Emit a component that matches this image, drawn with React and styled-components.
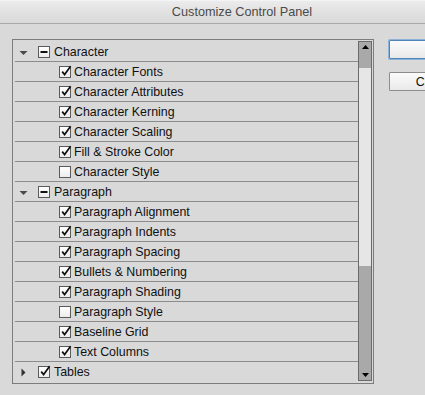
import styled, { createGlobalStyle } from "styled-components";

const Global = createGlobalStyle`
    html, body {
        margin: 0;
        padding: 0;
        background: #d9d9d9;
        overflow: hidden;
    }
    body {
        font-family: "Liberation Sans", Arial, sans-serif;
        color: #111;
    }
`;

const Window = styled.div`
    width: 425px;
    height: 395px;
    display: flex;
    flex-direction: column;
    background: #d9d9d9;
    overflow: hidden;
`;

const TitleBar = styled.div`
    height: 22px;
    flex: none;
    display: flex;
    align-items: center;
    justify-content: center;
    padding-left: 59px;
    background: linear-gradient(#ececec, #e3e3e3 40%, #d9d9d9);
    border-top: 1px solid #f4f4f4;
    border-bottom: 1px solid #a9a9a9;
    font-size: 12.7px;
    color: #4a4a4a;
`;

const Body = styled.div`
    display: flex;
    flex-direction: row;
    padding: 15px 0 0 12px;
`;

const ListBox = styled.div`
    width: 357px;
    height: 341px;
    flex: none;
    border: 1px solid #7c7c7c;
    padding: 2px 1px 0 2px;
    display: flex;
    flex-direction: row;
    box-sizing: content-box;
`;

const List = styled.div`
    flex: 1;
    display: flex;
    flex-direction: column;
`;

const Row = styled.div`
    flex: none;
    display: flex;
    align-items: center;
    padding-left: ${(p) => p.$indent}px;
    padding-top: 1px;
    box-sizing: content-box;
    height: 18px;
    border-bottom: ${(p) => (p.$last ? "none" : "1px solid #8c8c8c")};
    font-size: 12.4px;
`;

const Disclosure = styled.svg`
    width: 9px;
    height: 9px;
    margin-right: 10px;
    flex: none;
`;

const Box = styled.span`
    width: 10px;
    height: 10px;
    flex: none;
    position: relative;
    border: 1px solid #5a5a5a;
    background: linear-gradient(#ffffff, #ececec);
    margin-right: ${(p) => p.$gap}px;
`;

const Mark = styled.svg`
    position: absolute;
    left: 0;
    top: -2px;
    width: 12px;
    height: 12px;
`;

const Label = styled.span`
    line-height: 18px;
    white-space: nowrap;
`;

const ScrollBar = styled.div`
    width: 12px;
    flex: none;
    border: 1px solid #6b6b6b;
    display: flex;
    flex-direction: column;
    margin-top: -1px;
    margin-bottom: 2px;
`;

const ScrollCap = styled.div`
    height: ${(p) => p.$h}px;
    flex: none;
    background: #a9a9a9;
    display: flex;
    flex-direction: column;
    align-items: center;
    justify-content: ${(p) => (p.$down ? "flex-end" : "flex-start")};
    padding: 3px 0;
    box-sizing: border-box;
`;

const Track = styled.div`
    flex: 1;
    background: #e6e6e6;
`;

const Buttons = styled.div`
    display: flex;
    flex-direction: column;
    flex: none;
    gap: 13px;
    margin-left: 15px;
    padding-top: 1px;
`;

const Button = styled.div`
    width: 90px;
    height: 17px;
    flex: none;
    display: flex;
    align-items: center;
    justify-content: center;
    font-size: 12.4px;
    background: linear-gradient(#fbfbfb, #e9e9e9);
    border: 1px solid ${(p) => (p.$focus ? "#4f84b8" : "#8d8d8d")};
    box-shadow: ${(p) => (p.$focus ? "0 0 0 1px #8db3d9" : "none")};
    border-radius: 1px;
`;

const items = [
    { label: "Character", group: true, state: "mixed", open: true },
    { label: "Character Fonts", state: "on" },
    { label: "Character Attributes", state: "on" },
    { label: "Character Kerning", state: "on" },
    { label: "Character Scaling", state: "on" },
    { label: "Fill & Stroke Color", state: "on" },
    { label: "Character Style", state: "off" },
    { label: "Paragraph", group: true, state: "mixed", open: true },
    { label: "Paragraph Alignment", state: "on" },
    { label: "Paragraph Indents", state: "on" },
    { label: "Paragraph Spacing", state: "on" },
    { label: "Bullets & Numbering", state: "on" },
    { label: "Paragraph Shading", state: "on" },
    { label: "Paragraph Style", state: "off" },
    { label: "Baseline Grid", state: "on" },
    { label: "Text Columns", state: "on" },
    { label: "Tables", group: true, state: "on", open: false },
];

const Check = ({ state, gap }) => (
    <Box $gap={gap}>
        {state === "on" && (
            <Mark viewBox="0 0 12 12">
                <path
                    d="M2.2 6.6 L4.6 9.6 L10.6 1.2"
                    fill="none"
                    stroke="#111"
                    strokeWidth="1.7"
                />
            </Mark>
        )}
        {state === "mixed" && (
            <Mark viewBox="0 0 12 12" style={{ top: 0, left: -1 }}>
                <rect x="2.5" y="4" width="7" height="2" fill="#111" />
            </Mark>
        )}
    </Box>
);

const Arrow = ({ open }) => (
    <Disclosure viewBox="0 0 9 9">
        {open ? (
            <path d="M0.5 3 L8.5 3 L4.5 7 Z" fill="#4a4a4a" />
        ) : (
            <path d="M2.5 0.5 L6.5 4.5 L2.5 8.5 Z" fill="#333" />
        )}
    </Disclosure>
);

export default function App() {
    return (
        <Window>
            <Global />
            <TitleBar>Customize Control Panel</TitleBar>
            <Body>
                <ListBox>
                    <List>
                        {items.map((it, i) => (
                            <Row
                                key={it.label}
                                $indent={it.group ? 4 : 44}
                                $last={i === items.length - 1}
                            >
                                {it.group && <Arrow open={it.open} />}
                                <Check state={it.state} gap={it.group ? 4 : 3} />
                                <Label>{it.label}</Label>
                            </Row>
                        ))}
                    </List>
                    <ScrollBar>
                        <ScrollCap $h={26}>
                            <svg width="7" height="4" viewBox="0 0 7 4">
                                <path d="M0 4 L7 4 L3.5 0 Z" fill="#000" />
                            </svg>
                        </ScrollCap>
                        <Track />
                        <ScrollCap $h={114} $down>
                            <svg width="7" height="4" viewBox="0 0 7 4">
                                <path d="M0 0 L7 0 L3.5 4 Z" fill="#000" />
                            </svg>
                        </ScrollCap>
                    </ScrollBar>
                </ListBox>
                <Buttons>
                    <Button $focus>OK</Button>
                    <Button>Cancel</Button>
                </Buttons>
            </Body>
        </Window>
    );
}
